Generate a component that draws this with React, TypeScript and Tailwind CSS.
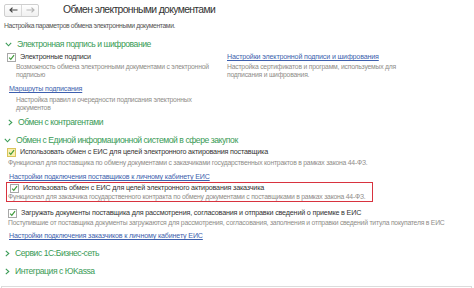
import React from "react";

const Check = ({ focus = false }: { focus?: boolean }) => (
  <span
    className={
      "inline-flex items-center justify-center w-[9px] h-[9px] border shrink-0 " +
      (focus ? "border-[#d9c35a] bg-[#fbf0b0]" : "border-[#a8a8a8] bg-white")
    }
  >
    <svg width="9" height="9" viewBox="0 0 9 9">
      <path d="M1.5 4.6 L3.6 6.8 L7.8 1.4" fill="none" stroke="#3f9a3a" strokeWidth="1.5" />
    </svg>
  </span>
);

const ChevDown = () => (
  <svg width="7" height="5" viewBox="0 0 7 5" className="shrink-0">
    <path d="M0.8 0.8 L3.5 3.8 L6.2 0.8" fill="none" stroke="#3a9b56" strokeWidth="1.1" />
  </svg>
);
const ChevRight = () => (
  <svg width="5" height="7" viewBox="0 0 5 7" className="shrink-0">
    <path d="M0.8 0.8 L3.8 3.5 L0.8 6.2" fill="none" stroke="#3a9b56" strokeWidth="1.1" />
  </svg>
);

const Section = ({
  open,
  children,
  cls,
}: {
  open: boolean;
  children: React.ReactNode;
  cls: string;
}) => (
  <div className={"flex items-center h-[12px] text-[8.6px] tracking-[-0.45px] leading-[12px] text-[#3a9b56] " + cls}>
    {open ? <ChevDown /> : <ChevRight />}
    <span className="ml-[5px] whitespace-nowrap">{children}</span>
  </div>
);

const Desc = ({ children, cls = "" }: { children: React.ReactNode; cls?: string }) => (
  <div className={"text-[6.8px] tracking-[-0.22px] leading-[8px] text-[#8f8d89] " + cls}>{children}</div>
);

const Link = ({ children, cls = "" }: { children: React.ReactNode; cls?: string }) => (
  <div className={"h-[10px] text-[7.1px] tracking-[-0.15px] leading-[10px] text-[#3d5fae] underline whitespace-nowrap " + cls}>
    {children}
  </div>
);

const CbRow = ({
  children,
  cls = "",
  focus = false,
}: {
  children: React.ReactNode;
  cls?: string;
  focus?: boolean;
}) => (
  <div className={"flex items-center h-[10px] text-[7.2px] tracking-[-0.18px] leading-[10px] text-[#333] whitespace-nowrap " + cls}>
    <Check focus={focus} />
    <span className="ml-[4px]">{children}</span>
  </div>
);

export default function App() {
  return (
    <div
      className="w-[474px] h-[288px] bg-white overflow-hidden relative"
      style={{ fontFamily: '"Liberation Sans", Arial, sans-serif' }}
    >
      {/* header */}
      <div className="flex items-center h-[20px]">
        <div className="ml-[4px] flex h-[13px] w-[35px] border border-[#cfcfcf] rounded-[2px] bg-gradient-to-b from-white to-[#f0f0f0]">
          <div className="flex-1 flex items-center justify-center border-r border-[#d8d8d8]">
            <svg width="9" height="6" viewBox="0 0 9 6">
              <path d="M8.5 3 H1.5 M3.5 0.6 L1 3 L3.5 5.4" fill="none" stroke="#444" strokeWidth="1.2" />
            </svg>
          </div>
          <div className="flex-1 flex items-center justify-center">
            <svg width="9" height="6" viewBox="0 0 9 6">
              <path d="M0.5 3 H7.5 M5.5 0.6 L8 3 L5.5 5.4" fill="none" stroke="#b5b5b5" strokeWidth="1.2" />
            </svg>
          </div>
        </div>
        <div className="ml-[24px] text-[10.4px] tracking-[-0.65px] leading-[14px] text-[#333] whitespace-nowrap">
          Обмен электронными документами
        </div>
      </div>

      <div className="mt-[2px] ml-[4px] text-[6.8px] tracking-[-0.38px] leading-[8px] text-[#555]">
        Настройка параметров обмена электронными документами.
      </div>

      <Section open cls="mt-[8px] ml-[5px]">
        Электронная подпись и шифрование
      </Section>

      <div className="flex">
        <div className="w-[220px] shrink-0">
          <CbRow cls="mt-[2px] ml-[7px]">Электронные подписи</CbRow>
          <Desc cls="mt-[1px] ml-[16px] w-[204px]">
            Возможность обмена электронными документами с электронной подписью
          </Desc>
          <Link cls="mt-[5px] ml-[9px]">Маршруты подписания</Link>
          <Desc cls="mt-[2px] ml-[16px] w-[196px]">
            Настройка правил и очередности подписания электронных документов
          </Desc>
        </div>
        <div className="ml-[7px]">
          <Link cls="mt-[2px]">Настройки электронной подписи и шифрования</Link>
          <Desc cls="mt-[1px] w-[175px]">
            Настройка сертификатов и программ, используемых для подписания и шифрования.
          </Desc>
        </div>
      </div>

      <Section open={false} cls="mt-[4px] ml-[8px]">
        Обмен с контрагентами
      </Section>

      <Section open cls="mt-[6px] ml-[4px]">
        Обмен с Единой информационной системой в сфере закупок
      </Section>

      <CbRow cls="mt-[1px] ml-[7px]" focus>
        Использовать обмен с ЕИС для целей электронного актирования поставщика
      </CbRow>
      <Desc cls="mt-[2px] ml-[8px] whitespace-nowrap">
        Функционал для поставщика по обмену документами с заказчиками государственных контрактов в рамках закона 44-ФЗ.
      </Desc>
      <Link cls="mt-[5px] ml-[9px]">Настройки подключения поставщиков к личному кабинету ЕИС</Link>

      <div className="ml-[6px] w-[367px] h-[20px] border border-[#d8333f]">
        <CbRow cls="ml-[3px]">Использовать обмен с ЕИС для целей электронного актирования заказчика</CbRow>
        <Desc cls="ml-[1px] whitespace-nowrap">
          Функционал для заказчика государственного контракта по обмену документами с поставщиками в рамках закона 44-ФЗ.
        </Desc>
      </div>

      <CbRow cls="mt-[6px] ml-[8px]">
        Загружать документы поставщика для рассмотрения, согласования и отправки сведений о приемке в ЕИС
      </CbRow>
      <Desc cls="mt-[1px] ml-[8px] whitespace-nowrap">
        Поступившие от поставщика документы загружаются для рассмотрения, согласования, заполнения и отправки сведений титула покупателя в ЕИС
      </Desc>
      <Link cls="mt-[4px] ml-[9px]">Настройки подключения заказчиков к личному кабинету ЕИС</Link>

      <Section open={false} cls="mt-[6px] ml-[5px]">
        Сервис 1С:Бизнес-сеть
      </Section>
      <Section open={false} cls="mt-[6px] ml-[5px]">
        Интеграция с ЮKassa
      </Section>

      <div className="mt-[9px] ml-[1px] w-[471px] h-[4px] border-l border-r border-t border-[#dcdcdc]" />
    </div>
  );
}
